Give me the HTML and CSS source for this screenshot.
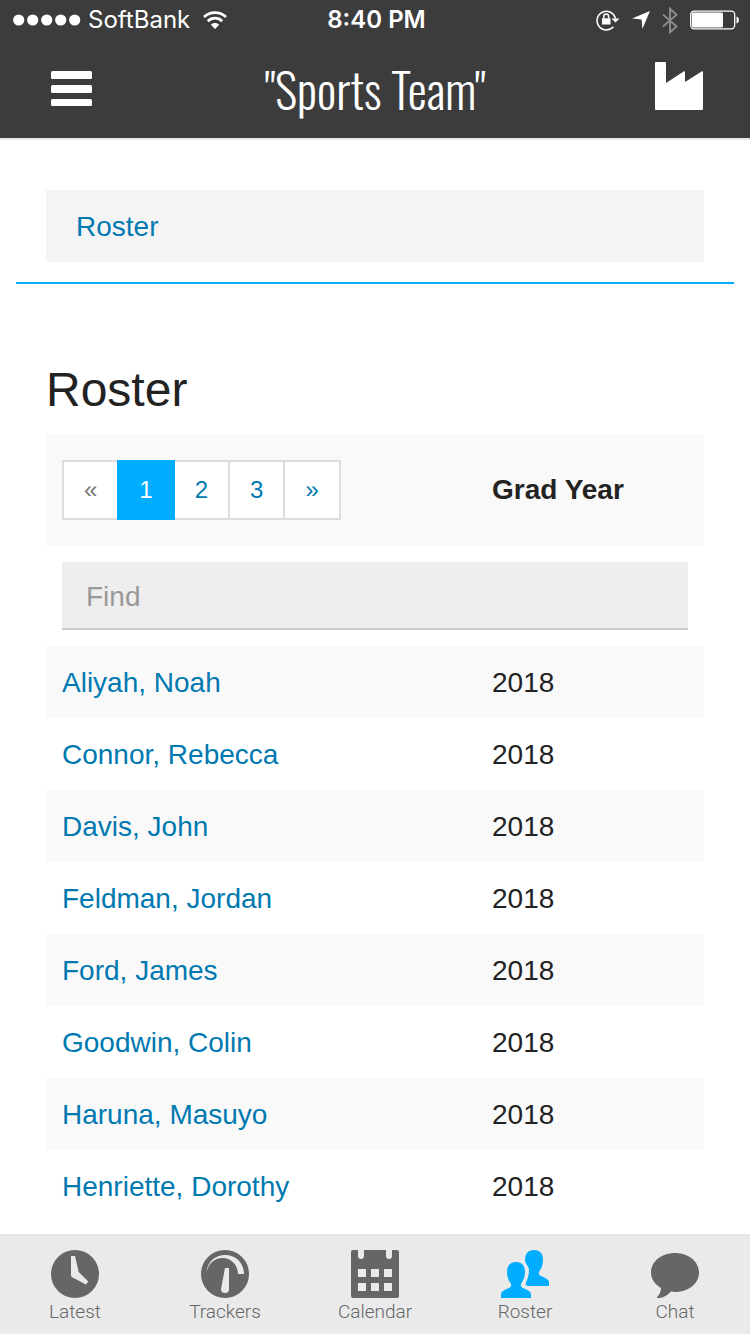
FILE: index.html
```html
<!DOCTYPE html>
<html lang="en">
<head>
    <meta charset="utf-8">
    <meta name="viewport" content="width=device-width, initial-scale=1">
    <title>Roster</title>
    <link rel="stylesheet" href="styles.css">
</head>
<body>
<header class="header">
    <div class="status_bar">
        <div class="status_left">
            <svg width="68" height="12" viewBox="0 0 68 12" fill="#fff">
                <circle cx="5.7" cy="6" r="5.6"/>
                <circle cx="19.7" cy="6" r="5.6"/>
                <circle cx="33.7" cy="6" r="5.6"/>
                <circle cx="47.7" cy="6" r="5.6"/>
                <circle cx="61.7" cy="6" r="5.6"/>
            </svg>
            <span>SoftBank</span>
            <svg width="24" height="18" viewBox="0 0 24 18" fill="none" stroke="#fff" stroke-width="2.800">
                <path d="M1 6C7 .1 17 .1 23 6"/>
                <path d="M4.800 10.200c4-4 10.400-4 14.400 0"/>
                <path d="M12 18l-4.200-4.300c2.300-2.300 6.100-2.300 8.400 0z" fill="#fff" stroke="none"/>
            </svg>
        </div>
        <div class="status_time">8:40 PM</div>
        <div class="status_right">
            <!-- rotation lock -->
            <svg width="24" height="22" viewBox="0 0 24 22" fill="none" stroke="#fff">
                <path d="M17.400 17.700A9.300 9.300 0 1 1 19.400 9.500" stroke-width="1.500"/>
                <path d="M15.500 9.500h8L19.500 13.500z" fill="#fff" stroke="none"/>
                <rect x="6" y="9.300" width="8.500" height="6.200" fill="#fff" stroke="none"/>
                <path d="M7.800 9.500V7.300a2.400 2.400 0 0 1 4.800 0v2.200" stroke-width="1.500"/>
            </svg>
            <!-- location -->
            <svg width="18" height="18" viewBox="0 0 18 18" fill="#fff">
                <path d="M18 0L10.400 18 9.600 8.400 0 7.600z"/>
            </svg>
            <!-- bluetooth -->
            <svg width="16" height="27" viewBox="0 0 16 27" fill="none" stroke="#8a8a8a" stroke-width="2">
                <path d="M1 7.500l13.500 12L8 25.300V1.700l6.500 6L1 19.500"/>
            </svg>
            <!-- battery -->
            <svg width="50" height="20" viewBox="0 0 50 20" fill="#fff">
                <rect x=".7" y="1.200" width="44" height="17.600" rx="3.500" fill="none" stroke="#fff" stroke-width="1.300"/>
                <rect x="2" y="2.500" width="31" height="15" rx="1.500"/>
                <path d="M46.500 6.500c3.300.5 3.300 6.500 0 7z"/>
            </svg>
        </div>
    </div>
    <div class="nav_bar">
        <button type="button" class="nav_button" aria-label="Menu">
            <svg width="41" height="36" viewBox="0 0 41 36" fill="#fff">
                <rect y="0" width="41" height="8" rx="1.500"/>
                <rect y="14" width="41" height="8" rx="1.500"/>
                <rect y="28" width="41" height="7" rx="1.500"/>
            </svg>
        </button>
        <div class="nav_title">"Sports Team"</div>
        <button type="button" class="nav_button team_button" aria-label="Factory">
            <svg width="48" height="48" viewBox="0 0 48 48" fill="#fff">
                <path d="M1 0h9q1 0 1 1v20L29 9.300q1-.5 1 .7v10L47 9.300q1-.5 1 .7v37q0 1-1 1H1q-1 0-1-1V1q0-1 1-1z"/>
            </svg>
        </button>
    </div>
</header>

<main class="content">
    <nav class="breadcrumb_wrap" aria-label="Breadcrumb">
        <div class="breadcrumb"><a href="#">Roster</a></div>
    </nav>

    <section class="roster">
        <h1>Roster</h1>
        <table class="roster_table">
            <thead>
                <tr class="head_row">
                    <th>
                        <div class="pager">
                            <a class="disabled" href="#" aria-label="Previous">«</a>
                            <a class="active" href="#">1</a>
                            <a href="#">2</a>
                            <a href="#">3</a>
                            <a href="#" aria-label="Next">»</a>
                        </div>
                    </th>
                    <th class="year">Grad Year</th>
                </tr>
                <tr class="find_row">
                    <td colspan="2"><input type="text" class="find" placeholder="Find" aria-label="Find"></td>
                </tr>
            </thead>
            <tbody>
                <tr><td><a href="#">Aliyah, Noah</a></td><td>2018</td></tr>
                <tr><td><a href="#">Connor, Rebecca</a></td><td>2018</td></tr>
                <tr><td><a href="#">Davis, John</a></td><td>2018</td></tr>
                <tr><td><a href="#">Feldman, Jordan</a></td><td>2018</td></tr>
                <tr><td><a href="#">Ford, James</a></td><td>2018</td></tr>
                <tr><td><a href="#">Goodwin, Colin</a></td><td>2018</td></tr>
                <tr><td><a href="#">Haruna, Masuyo</a></td><td>2018</td></tr>
                <tr><td><a href="#">Henriette, Dorothy</a></td><td>2018</td></tr>
            </tbody>
        </table>
    </section>
</main>

<nav class="tab_bar" aria-label="Tabs">
    <a class="tab" href="#">
        <svg width="48" height="48" viewBox="0 0 48 48">
            <circle cx="24" cy="24" r="24" fill="currentColor"/>
            <path d="M20 6h4l3.700 16 9.600 9.500-2.400 3L20.700 27q-.7-.8-.7-2z" fill="#eaeaea"/>
        </svg>
        <span>Latest</span>
    </a>
    <a class="tab" href="#">
        <svg width="48" height="48" viewBox="0 0 48 48">
            <circle cx="24" cy="24" r="24" fill="currentColor"/>
            <path d="M5.500 23C6 12 14 5 24 5c11 0 19 8 19 19h-6C37 15 30 8 21.500 8 13 8 7 14 5.500 23z" fill="#eaeaea"/>
            <path d="M24 18h4v21a4 4 0 0 1-8 0z" fill="#eaeaea"/>
        </svg>
        <span>Trackers</span>
    </a>
    <a class="tab" href="#">
        <svg width="48" height="48" viewBox="0 0 48 48" fill="currentColor">
            <path d="M2 0h5v6a3 3 0 0 0 6 0V0h22v6a3 3 0 0 0 6 0V0h5q2 0 2 2v44q0 2-2 2H2q-2 0-2-2V2q0-2 2-2z"/>
            <path d="M7 19h8v8H7zM20 19h8v8h-8zM33 19h8v8h-8zM7 33h8v8H7zM20 33h8v8h-8zM33 33h8v8h-8z" fill="#eaeaea"/>
        </svg>
        <span>Calendar</span>
    </a>
    <a class="tab selected" href="#" aria-current="page">
        <svg width="48" height="48" viewBox="0 0 48 48" fill="currentColor">
            <path d="M15 12c6 0 9 4 9 9.500 0 5-1.500 9-3.500 11.500-1.500 2-.5 4 1.500 5 4 2 8 3 8 6.500V48H0v-3.500C0 41 4 40 8 38c2-1 3-3 1.500-5C7.500 30.500 6 26.500 6 21.500 6 16 9 12 15 12z"/>
            <path d="M33 0c6 0 9 4 9 9.500 0 5-1.500 9-3.500 11.500-1.500 2-.5 4 1.500 5 4 2 8 3 8 6.500V36H26.500l-2-1.200c.5-3.800 3.500-7 3.500-14.800 0-4.500-4-5-4-10.500C24 4 27 0 33 0z"/>
        </svg>
        <span>Roster</span>
    </a>
    <a class="tab" href="#">
        <svg width="48" height="48" viewBox="0 0 48 48" fill="currentColor">
            <path d="M24 3c13.500 0 24 8.500 24 19.500S37.500 42 24 42q-2.300 0-4-.4C15 47 10 48.300 6.500 48c-.7 0-.7-.7-.2-1.200C8.500 44.500 10 41.500 10 38 4 34.500 0 29 0 22.500 0 11.500 10.500 3 24 3z"/>
        </svg>
        <span>Chat</span>
    </a>
</nav>
</body>
</html>
```
FILE: styles.css
```css
* {
    box-sizing: border-box;
}

body {
    margin: 0;
    height: 100vh;
    display: flex;
    flex-direction: column;
    background-color: #fff;
    color: #222;
    font-family: "Liberation Sans", Helvetica, Arial, sans-serif;
    font-size: 28px;
    line-height: 40px;
}

a {
    color: #0079b1;
    text-decoration: none;
}

svg {
    display: block;
    flex-shrink: 0;
}

.header {
    flex-shrink: 0;
    border-bottom: 2px solid #e6e6e6;
    background-color: #3c3c3c;
    color: #fff;
}

.status_bar {
    display: grid;
    grid-template-columns: 1fr auto 1fr;
    align-items: center;
    height: 40px;
    padding: 0 10px 0 13px;
    font-family: Inter, sans-serif;
    font-size: 24px;
}

.status_left,
.status_right {
    display: flex;
    align-items: center;
    gap: 8px;
}

.status_left {
    gap: 7px;
}

.status_left svg:last-child {
    margin-left: 6px;
}

.status_time {
    font-weight: 600;
}

.status_right {
    justify-content: flex-end;
    gap: 12px;
}

.nav_bar {
    display: flex;
    align-items: center;
    justify-content: space-between;
    height: 98px;
    padding: 0 46px;
}

.nav_button {
    display: flex;
    justify-content: center;
    min-width: 50px;
    padding: 0;
    border: none;
    background: none;
    cursor: pointer;
}

.team_button {
    padding-bottom: 6px;
}

.nav_title {
    font-family: Oswald, "Open Sans Condensed", "Roboto Condensed", "Liberation Sans Narrow", sans-serif;
    font-weight: 300;
    font-size: 48px;
    line-height: 64px;
}

.content {
    flex: 1;
    min-height: 0;
    overflow-y: auto;
    padding: 50px 16px 12px;
}

.breadcrumb_wrap {
    padding: 0 30px 20px;
    border-bottom: 2px solid #00adff;
}

.breadcrumb {
    padding: 17px 30px 15px;
    background-color: #f4f4f4;
}

.roster {
    padding: 76px 30px 0;
}

h1 {
    margin: 0 0 14px;
    font-size: 48px;
    font-weight: normal;
    line-height: 60px;
}

.roster_table {
    width: 100%;
    border-collapse: collapse;
    table-layout: fixed;
}

.roster_table td,
.roster_table th {
    padding: 16px;
    text-align: left;
}

.roster_table tbody td {
    padding: 17px 16px 15px;
}

.roster_table .head_row th {
    padding: 26px 16px;
}

.year {
    width: 228px;
}

.head_row,
.roster_table tbody tr:nth-child(odd) {
    background-color: #f9f9f9;
}

.pager {
    display: flex;
    font-size: 24px;
    font-weight: normal;
}

.pager a {
    padding: 8px 20px;
    border: 2px solid #ddd;
    background-color: #fff;
}

.pager a + a {
    margin-left: -2px;
}

.pager .disabled {
    color: #777;
}

.pager .active {
    z-index: 1;
    border-color: #00adff;
    background-color: #00adff;
    color: #fff;
}

.find {
    display: block;
    width: 100%;
    height: 68px;
    padding: 3px 24px 0;
    border: none;
    border-bottom: 2px solid #ccc;
    border-radius: 0;
    background-color: #eee;
    color: #222;
    font-family: inherit;
    font-size: 28px;
}

.find::placeholder {
    color: #999;
}

.tab_bar {
    display: flex;
    flex-shrink: 0;
    height: 100px;
    border-top: 2px solid #e6e6e6;
    background-color: #eaeaea;
}

.tab {
    flex: 1;
    display: flex;
    flex-direction: column;
    align-items: center;
    padding-top: 14px;
    color: #666;
    font-family: Roboto, sans-serif;
    font-size: 19px;
    font-weight: 300;
    line-height: 28px;
}

.tab.selected svg {
    color: #00adff;
}
```
